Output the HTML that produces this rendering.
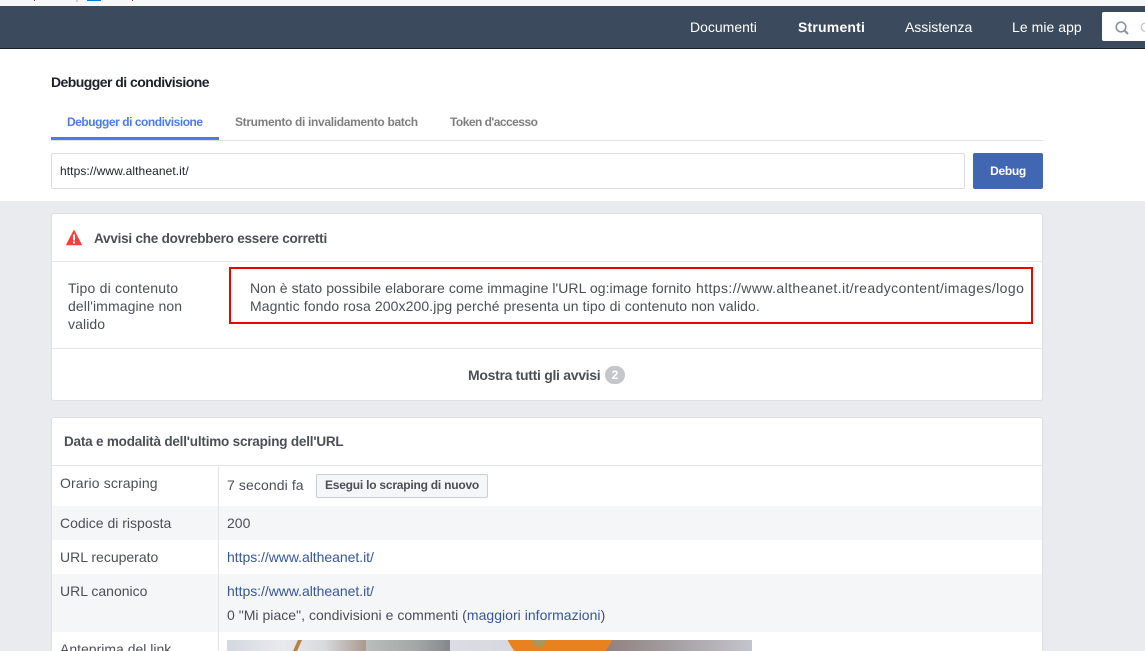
<!DOCTYPE html>
<html lang="it"><head><meta charset="utf-8"><title>Debugger di condivisione</title>
<style>
html{margin:0;padding:0;width:1145px;height:651px;overflow:hidden;background:#e9ebee}
body{margin:0;padding:0;width:1145px;height:651px;overflow:hidden;position:relative;background:#e9ebee;font-family:"Liberation Sans",sans-serif;color:#4b4f56;font-size:14px}
div,svg{position:absolute;white-space:nowrap}
a{color:#365899;text-decoration:none}
a.p{position:absolute;white-space:nowrap}
.t{line-height:18px}
.b{font-weight:bold}
.nav{color:#fff;top:18px;line-height:18px;font-size:14px}
.h{background:#f5f6f7}
#w{left:0;top:0;width:1145px;height:651px;overflow:hidden}
</style></head><body><div id="w">
<div style="left:0;top:0;width:1145px;height:6px;background:#f8f8f8"></div>
<div style="left:34px;top:0;width:1px;height:1px;background:#8a1a6a"></div>
<div style="left:76px;top:0;width:2px;height:2px;background:#ccc"></div>
<div style="left:87px;top:0;width:14px;height:1px;background:#0a78c8"></div>
<div style="left:132px;top:0;width:1px;height:1px;background:#8a1a6a"></div>

<div style="left:0;top:6px;width:1145px;height:42px;background:#3b4a5c;border-bottom:1px solid #1c2128"></div>
<div class="nav" style="left:690px">Documenti</div>
<div class="nav b" style="left:798px;letter-spacing:.2px">Strumenti</div>
<div class="nav" style="left:905px;letter-spacing:-.05px">Assistenza</div>
<div class="nav" style="left:1012px;letter-spacing:.05px">Le mie app</div>
<div style="left:1102px;top:12px;width:43px;height:29px;background:#fff;border-radius:2px 0 0 2px"></div>
<svg style="left:1114px;top:20px" width="16" height="16" viewBox="0 0 16 16"><circle cx="7" cy="7" r="4.8" fill="none" stroke="#8d949e" stroke-width="1.6"/><path d="M10.5 10.5L14 14" stroke="#8d949e" stroke-width="2"/></svg>
<div style="left:1140px;top:18px;color:#c4c4c4;line-height:18px;font-size:14px">C</div>

<div style="left:0;top:49px;width:1145px;height:152px;background:#fff"></div>
<div class="t b" style="left:51px;top:73px;color:#1d2129;font-size:14px;letter-spacing:-.55px">Debugger di condivisione</div>
<div class="t b" style="left:67px;top:113px;color:#4b7bf0;font-size:12px;letter-spacing:-.46px">Debugger di condivisione</div>
<div class="t b" style="left:235px;top:113px;color:#7f7f7f;font-size:12px;letter-spacing:-.33px">Strumento di invalidamento batch</div>
<div class="t b" style="left:450px;top:113px;color:#7f7f7f;font-size:12px;letter-spacing:-.53px">Token d'accesso</div>
<div style="left:51px;top:140px;width:992px;height:1px;background:#e1e2e4"></div>
<div style="left:51px;top:137px;width:168px;height:3px;background:#4b7bf0"></div>
<div style="left:51px;top:153px;width:912px;height:34px;background:#fff;border:1px solid #dddfe2;border-radius:2px"></div>
<div class="t" style="left:60px;top:162px;font-size:12px;color:#1d2129;letter-spacing:.08px">https://www.altheanet.it/</div>
<div style="left:973px;top:153px;width:70px;height:36px;background:#4267b2;border-radius:2px"></div>
<div class="t b" style="left:973px;width:70px;text-align:center;top:162px;font-size:12px;color:#fff;letter-spacing:-.3px">Debug</div>

<div style="left:51px;top:213px;width:990px;height:186px;background:#fff;border:1px solid #dddfe2;border-radius:3px"></div>
<svg style="left:65px;top:229px" width="18" height="17" viewBox="0 0 18 17"><path d="M9 1.5L16.5 15.8H1.5Z" fill="#fa3e3e" stroke="#fa3e3e" stroke-linejoin="round"/><rect x="8" y="5.5" width="2" height="6" fill="#fff"/><rect x="8" y="12.5" width="2" height="2" fill="#fff"/></svg>
<div class="t b" style="left:94px;top:230px;font-size:13.5px;letter-spacing:-.22px">Avvisi che dovrebbero essere corretti</div>
<div style="left:52px;top:261px;width:990px;height:1px;background:#e5e6e8"></div>
<div class="t" style="left:68px;top:279px;letter-spacing:.2px">Tipo di contenuto</div>
<div class="t" style="left:68px;top:297px;letter-spacing:.1px">dell'immagine non</div>
<div class="t" style="left:68px;top:315px;letter-spacing:.1px">valido</div>
<div class="t" style="left:250px;top:279px;letter-spacing:.06px">Non è stato possibile elaborare come immagine l'URL og:image fornito</div>
<div class="t" style="left:696px;top:279px;letter-spacing:.41px">https://www.altheanet.it/readycontent/images/logo</div>
<div class="t" style="left:250px;top:297px;letter-spacing:.1px">Magntic fondo rosa 200x200.jpg perché presenta un tipo di contenuto non valido.</div>
<div style="left:229px;top:267px;width:800px;height:53px;border:2px solid #ee0000"></div>
<div style="left:52px;top:348px;width:990px;height:1px;background:#e5e6e8"></div>
<div class="t b" style="left:468px;top:366px;font-size:14px;letter-spacing:-.3px">Mostra tutti gli avvisi</div>
<div style="left:605px;top:366px;width:20px;height:18px;border-radius:9px;background:#c4c6c9;color:#fff;font-size:12px;font-weight:bold;text-align:center;line-height:18px">2</div>

<div style="left:51px;top:417px;width:990px;height:240px;background:#fff;border:1px solid #dddfe2;border-radius:3px"></div>
<div class="t b" style="left:64px;top:433px;font-size:13.5px;letter-spacing:-.2px">Data e modalità dell'ultimo scraping dell'URL</div>
<div style="left:52px;top:465px;width:990px;height:1px;background:#e5e6e8"></div>
<div class="h" style="left:52px;top:506px;width:990px;height:34px"></div>
<div class="h" style="left:52px;top:574px;width:990px;height:58px"></div>
<div style="left:218px;top:466px;width:1px;height:185px;background:#e5e6e8"></div>

<div class="t" style="left:60px;top:474px;letter-spacing:.13px">Orario scraping</div>
<div class="t" style="left:227px;top:476px;letter-spacing:.1px">7 secondi fa</div>
<div style="left:316px;top:474px;width:170px;height:22px;background:#f5f6f7;border:1px solid #ccd0d5;border-radius:2px"></div>
<div class="t b" style="left:316px;width:172px;text-align:center;top:476px;font-size:12px;letter-spacing:-.22px">Esegui lo scraping di nuovo</div>
<div class="t" style="left:60px;top:514px">Codice di risposta</div>
<div class="t" style="left:227px;top:514px">200</div>
<div class="t" style="left:60px;top:548px">URL recuperato</div>
<a class="t p" style="left:227px;top:548px;letter-spacing:-.04px" href="#">https://www.altheanet.it/</a>
<div class="t" style="left:60px;top:582px">URL canonico</div>
<a class="t p" style="left:227px;top:582px;letter-spacing:-.04px" href="#">https://www.altheanet.it/</a>
<div class="t" style="left:227px;top:606px;letter-spacing:.03px">0 "Mi piace", condivisioni e commenti (<a href="#">maggiori informazioni</a>)</div>
<div class="t" style="left:60px;top:640px">Anteprima del link</div>

<div style="left:227px;top:640px;width:139px;height:11px;background:linear-gradient(90deg,#d4d8de,#e8eaee 40%,#d8dade 70%,#a89a90)"></div>
<div style="left:293px;top:640px;width:9px;height:11px;background:#b58050;clip-path:polygon(55% 0,100% 0,45% 100%,0 100%)"></div>
<div style="left:366px;top:640px;width:84px;height:11px;background:linear-gradient(90deg,#b9bdbc,#a3a7a6 60%,#85888a)"></div>
<div style="left:450px;top:640px;width:302px;height:11px;background:linear-gradient(90deg,#dcdde4,#d8d8df 20%,#8f7f7c 50%,#a09a9c 70%,#c4c4cc)"></div>
<div style="left:500px;top:640px;width:120px;height:11px;overflow:hidden"><div style="left:2px;top:-83px;width:116px;height:116px;border-radius:50%;background:#e8811f"></div><div style="left:32px;top:0;width:14px;height:7px;border-radius:0 0 7px 7px;background:#a8975f"></div></div>
</div></body></html>
